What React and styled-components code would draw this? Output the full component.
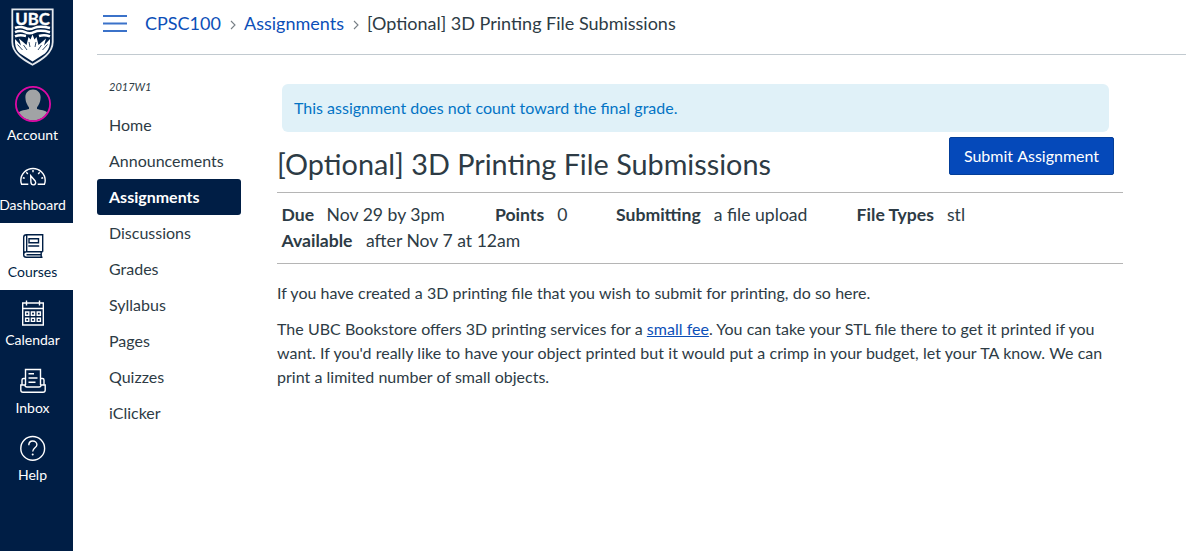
import React from "react";
import styled, { createGlobalStyle } from "styled-components";

const Global = createGlobalStyle`
  *, *::before, *::after { box-sizing: border-box; }
  html, body { margin: 0; background: #fff; overflow: hidden; }
  body { font-family: Lato, "Liberation Sans", sans-serif; color: #2d3b45; font-size: 16px; }
`;

const Page = styled.div`
  display: flex;
  height: 551px;
  overflow: hidden;
`;

const GlobalNav = styled.nav`
  flex: 0 0 73px;
  width: 73px;
  min-width: 0;
  background: #001e45;
  display: flex;
  flex-direction: column;
`;

const LogoBox = styled.div`
  height: 78px;
  padding: 8px 0 0 11px;
  svg { display: block; }
`;

const NavItem = styled.a`
  height: ${(p) => p.$height || 68}px;
  padding: ${(p) => p.$top || 10}px 8px 0 0;
  display: flex;
  flex-direction: column;
  align-items: center;
  background: ${(p) => (p.$active ? "#fff" : "transparent")};
  color: ${(p) => (p.$active ? "#001e45" : "#fff")};
  svg { display: block; flex: none; }
`;

const NavLabel = styled.span`
  margin-top: ${(p) => p.$gap ?? 5}px;
  font-size: 14px;
  line-height: 18px;
  white-space: nowrap;
`;

const Content = styled.div`
  flex: 1;
  min-width: 0;
  padding-left: 24px;
`;

const TopBar = styled.header`
  height: 55px;
  border-bottom: 1px solid #c2cad0;
  display: flex;
  align-items: center;
  padding: 0 0 7px 6px;
`;

const MenuButton = styled.button`
  width: 25px;
  height: 17px;
  padding: 0;
  border: 0;
  background: none;
  margin-right: 17px;
  svg { display: block; }
`;

const Crumbs = styled.div`
  display: flex;
  align-items: center;
  padding-bottom: 2px;
  font-size: 18px;
  line-height: 24px;
  white-space: nowrap;
  svg { margin: 5px 8px 0 9px; }
`;

const Crumb = styled.span`
  color: ${(p) => (p.$link ? "#0c4fb8" : "#2d3b45")};
`;

const Body = styled.div`
  display: flex;
`;

const CourseNav = styled.aside`
  width: 144px;
  margin-right: 36px;
  padding-top: 24px;
`;

const Term = styled.div`
  padding-left: 12px;
  height: 28px;
  font-size: 11px;
  line-height: 15px;
  font-style: italic;
`;

const CourseLink = styled.a`
  display: block;
  height: 36px;
  padding-left: 12px;
  line-height: 35px;
  border-radius: 3px;
  background: ${(p) => (p.$active ? "#001e45" : "transparent")};
  color: ${(p) => (p.$active ? "#fff" : "#2d3b45")};
  font-weight: ${(p) => (p.$active ? 700 : 400)};
`;

const Main = styled.main`
  width: 846px;
  padding-top: 29px;
`;

const Notice = styled.div`
  height: 48px;
  margin: 0 14px 0 5px;
  padding-left: 12px;
  border-radius: 6px;
  background: #e0f1f8;
  color: #0374c5;
  line-height: 47px;
`;

const TitleRow = styled.div`
  height: 61px;
  padding: 5px 9px 0 0;
  display: flex;
  justify-content: space-between;
  align-items: flex-start;
  border-bottom: 1px solid #b5b5b5;
`;

const Title = styled.h1`
  margin: 8px 0 0;
  font-size: 28.8px;
  line-height: 38px;
  font-weight: 400;
  white-space: nowrap;
`;

const SubmitButton = styled.button`
  width: 165px;
  height: 38px;
  padding: 0;
  border: 1px solid #033e99;
  border-radius: 2px;
  background: #0549ba;
  color: #fff;
  font: inherit;
  line-height: 36px;
  word-spacing: 0.6px;
  white-space: nowrap;
`;

const Details = styled.dl`
  margin: 0;
  height: 71px;
  padding: 9px 0 0 4.5px;
  border-bottom: 1px solid #b5b5b5;
  font-size: 17.6px;
  line-height: 26px;
`;

const DetailRow = styled.div`
  display: flex;
  white-space: nowrap;
`;

const Detail = styled.div`
  display: flex;
  gap: ${(p) => p.$gap || 13}px;
  width: ${(p) => (p.$width ? `${p.$width}px` : "auto")};
  dt { font-weight: 700; }
  dd { margin: 0; }
`;

const Description = styled.div`
  padding-top: 17px;
  line-height: 24px;
  white-space: nowrap;
  p { margin: 0 0 12px; }
  a { color: #0c4fb8; text-decoration: underline; }
`;

const Line = styled.span`
  display: block;
  word-spacing: ${(p) => p.$words || 0}px;
`;

const Crest = () => (
  <svg width="43" height="58" viewBox="0 0 43 58" fill="none">
    <path d="M1.3 1.3H41.7V34C41.7 45 31 51.500 21.500 56.700C12 51.500 1.300 45 1.300 34Z" fill="#001e45" stroke="#e4e8ed" strokeWidth="1.800" />
    <path d="M4 20C8 18.300 11 18.600 14 20S20 21.500 23 20S31 18 39 20M4 24.200C8 22.500 11 22.800 14 24.200S20 25.700 23 24.200S31 22.200 39 24.200M4 28.400C8 26.800 11 27 15 28M28 28C31 27 35 26.800 39 28.400" stroke="#fff" strokeWidth="2.500" />
    <path d="M4 31L10 37.500L8 30.500L15.500 37L17.500 29L19.500 31.500L21.500 26.500L23.500 31.500L25.500 29L27.500 37L35 30.500L33 37.500L39 31V35C38.500 40 36 43.500 34 45.500L21.500 53.500L9 45.500C6 43 4.500 40 4 35Z" fill="#fff" />
    <path d="M6.500 36.500L11.500 42M12.500 37L16 42M18 34L19 39M25 34L24 39M30.500 37L27 42M36.500 36.500L31.500 42" stroke="#001e45" strokeWidth=".8" />
    <text x="21.500" y="16.500" fill="#fff" stroke="#fff" strokeWidth=".4" fontFamily="Lato, sans-serif" fontSize="17.500" fontWeight="700" textAnchor="middle" textLength="34.500" lengthAdjust="spacingAndGlyphs">UBC</text>
  </svg>
);

const Avatar = () => (
  <svg width="36" height="36" viewBox="0 0 36 36">
    <circle cx="18" cy="18" r="17" fill="#001e45" />
    <clipPath id="avatar-clip"><circle cx="18" cy="18" r="16.500" /></clipPath>
    <g clipPath="url(#avatar-clip)" fill="#a1a3a5">
      <path d="M18 3.500C22.500 3.500 25.800 7 25.600 11.500C25.500 14 25 16 24.300 17.500C23.500 19.500 22.300 20.500 22 21.500V23C25 24 31 24 32.500 27V36H3.500V27C5 24 11 24 14 23V21.500C13.500 20.500 12.500 19.500 11.700 17.500C11 16 10.500 14 10.400 11.500C10.200 7 13.500 3.500 18 3.500Z" />
    </g>
    <circle cx="18" cy="18" r="17.100" fill="none" stroke="#de0aa5" strokeWidth="1.800" />
  </svg>
);

const DashboardIcon = () => (
  <svg width="26" height="26" viewBox="0 0 26 26" fill="none" stroke="currentColor" strokeWidth="1.400">
    <path d="M8.300 19.300H1.600C1 17.800 .8 16.800 .8 15.500C.8 9 6.300 3.500 13 3.500S25.200 9 25.200 15.500C25.200 16.800 25 17.800 24.400 19.300H17.700" />
    <path d="M13 5V7.200M6.300 7.300L7.800 8.900M19.700 7.300L18.200 8.900M2.800 12.700L4.700 13.200M23.200 12.700L21.300 13.200" />
    <path d="M10.700 10.700L15.200 16C16.300 17.900 15.300 19.900 13.500 19.900C11.700 19.900 11 18.500 10.900 17Z" />
  </svg>
);

const CoursesIcon = () => (
  <svg width="26" height="26" viewBox="0 0 26 26" fill="none" stroke="currentColor" strokeWidth="1.400">
    <path d="M22.700 18.700V1.800H6.500C4.500 1.800 3.700 2.800 3.700 4.300V21.800C3.700 23.500 4.700 24.300 6.200 24.300H22.500M21.200 24.300V18.700M3.700 21.300C3.700 19.600 4.700 18.700 6.200 18.700H22.700M6.700 1.800V18.700M6.500 21.700H21.200" />
    <path d="M9 5.700H18.500V9.800H9ZM8.300 13H19.200" />
  </svg>
);

const CalendarIcon = () => (
  <svg width="26" height="26" viewBox="0 0 26 26" fill="none" stroke="currentColor" strokeWidth="1.400">
    <path d="M2.700 3H23.300V25H2.700ZM2.700 8.500H23.300M6.500 .5V5.500M19.500 .5V5.500" />
    <path d="M5.600 12H8.800V15.200H5.600ZM11.400 12H14.600V15.200H11.400ZM17.200 12H20.400V15.200H17.200ZM5.600 18.200H8.800V21.400H5.600ZM11.400 18.200H14.600V21.400H11.400ZM17.200 18.200H20.400V21.400H17.200Z" />
  </svg>
);

const InboxIcon = () => (
  <svg width="26" height="26" viewBox="0 0 26 26" fill="none" stroke="currentColor" strokeWidth="1.400">
    <path d="M5.500 17V1.500H20.500V17M8.500 5.700H14M8.500 10H17.500M8.500 14.300H15.500" />
    <path d="M5.500 10.500H3.500C2.300 10.500 2 11.200 2 12V17M20.500 10.500H22.500C23.700 10.500 24 11.200 24 12V17M.8 17H5C5 18.500 5.700 19 7 19H19C20.300 19 21 18.500 21 17H25.200V22C25.200 23.500 24.500 24.300 23 24.300H3C1.500 24.300 .8 23.500 .8 22Z" />
  </svg>
);

const HelpIcon = () => (
  <svg width="26" height="26" viewBox="0 0 26 26" fill="none" stroke="currentColor" strokeWidth="1.400">
    <circle cx="12.700" cy="13.400" r="11.900" />
    <path d="M8.800 10.200C8.800 7.500 10.500 6 12.700 6S16.900 7.500 16.900 9.700C16.900 12.700 12.700 12.900 12.700 16.500" />
    <circle cx="12.700" cy="19.500" r="1" fill="currentColor" stroke="none" />
  </svg>
);

const Chevron = () => (
  <svg width="6" height="10" viewBox="0 0 6 10" fill="none" stroke="#777f86" strokeWidth="1.100">
    <path d="M1 1L5 5L1 9" />
  </svg>
);

const courseLinks = ["Home", "Announcements", "Assignments", "Discussions", "Grades", "Syllabus", "Pages", "Quizzes", "iClicker"];

export default function App() {
  return (
    <>
      <Global />
      <Page>
        <GlobalNav>
          <LogoBox><Crest /></LogoBox>
          <NavItem $height={77} $top={8}><Avatar /><NavLabel $gap={4}>Account</NavLabel></NavItem>
          <NavItem><DashboardIcon /><NavLabel>Dashboard</NavLabel></NavItem>
          <NavItem $active $height={67}><CoursesIcon /><NavLabel $gap={4}>Courses</NavLabel></NavItem>
          <NavItem><CalendarIcon /><NavLabel>Calendar</NavLabel></NavItem>
          <NavItem $height={67}><InboxIcon /><NavLabel>Inbox</NavLabel></NavItem>
          <NavItem><HelpIcon /><NavLabel>Help</NavLabel></NavItem>
        </GlobalNav>
        <Content>
          <TopBar>
            <MenuButton aria-label="Toggle course navigation">
              <svg width="25" height="17" viewBox="0 0 25 17" stroke="#3b72c9" strokeWidth="1.800">
                <path d="M0 1H24M0 8.500H24M0 16H24" />
              </svg>
            </MenuButton>
            <Crumbs>
              <Crumb $link>CPSC100</Crumb>
              <Chevron />
              <Crumb $link>Assignments</Crumb>
              <Chevron />
              <Crumb>[Optional] 3D Printing File Submissions</Crumb>
            </Crumbs>
          </TopBar>
          <Body>
            <CourseNav>
              <Term>2017W1</Term>
              {courseLinks.map((name) => (
                <CourseLink key={name} $active={name === "Assignments"}>{name}</CourseLink>
              ))}
            </CourseNav>
            <Main>
              <Notice>This assignment does not count toward the final grade.</Notice>
              <TitleRow>
                <Title>[Optional] 3D Printing File Submissions</Title>
                <SubmitButton>Submit Assignment</SubmitButton>
              </TitleRow>
              <Details>
                <DetailRow>
                  <Detail $width={213.5} $gap={12.5}><dt>Due</dt><dd>Nov 29 by 3pm</dd></Detail>
                  <Detail $width={121}><dt>Points</dt><dd>0</dd></Detail>
                  <Detail $width={240.6}><dt>Submitting</dt><dd>a file upload</dd></Detail>
                  <Detail><dt>File Types</dt><dd>stl</dd></Detail>
                </DetailRow>
                <DetailRow>
                  <Detail $gap={13.5}><dt>Available</dt><dd>after Nov 7 at 12am</dd></Detail>
                </DetailRow>
              </Details>
              <Description>
                <p><Line $words={0.12}>If you have created a 3D printing file that you wish to submit for printing, do so here.</Line></p>
                <p>
                  <Line $words={0.1}>The UBC Bookstore offers 3D printing services for a <a>small fee</a>. You can take your STL file there to get it printed if you</Line>
                  <Line $words={0.23}>want. If you'd really like to have your object printed but it would put a crimp in your budget, let your TA know. We can</Line>
                  <Line $words={0.1}>print a limited number of small objects.</Line>
                </p>
              </Description>
            </Main>
          </Body>
        </Content>
      </Page>
    </>
  );
}
